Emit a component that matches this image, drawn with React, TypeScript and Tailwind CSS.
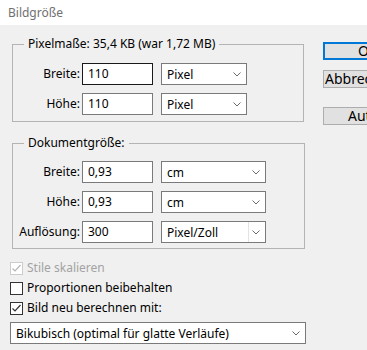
import React from 'react';

function Chevron() {
    return (
        <svg width="8" height="5" viewBox="0 0 8 5" className="shrink-0">
            <polyline points="0.5,0.5 4,4 7.5,0.5" fill="none" stroke="#6b6b6b" strokeWidth="1" />
        </svg>
    );
}

function Select({ value, width, split }: { value: string; width: string; split?: boolean }) {
    return (
        <div className={`flex h-[22px] items-center border border-[#7a7a7a] bg-white ${width}`}>
            <span className="flex-1 pt-[2px] pl-[5px] leading-none">{value}</span>
            {split && <div className="h-full w-px bg-[#e3e3e3]" />}
            <div className="flex w-[16px] justify-center pr-[2px]">
                <Chevron />
            </div>
        </div>
    );
}

function Field({ label, value, unit, selectWidth, focus, split }: {
    label: string; value: string; unit: string; selectWidth: string; focus?: boolean; split?: boolean;
}) {
    return (
        <div className="flex h-[22px] items-center">
            <span className="w-[67px] text-right">{label}</span>
            <div className={`ml-[2px] flex h-[22px] w-[71px] items-center border bg-white pl-[5px] ${focus ? 'border-[#1a1a1a]' : 'border-[#7a7a7a]'}`}>
                {value}
            </div>
            <div className="ml-[8px]">
                <Select value={unit} width={selectWidth} split={split} />
            </div>
        </div>
    );
}

function Check({ checked, disabled, label }: { checked: boolean; disabled?: boolean; label: string }) {
    return (
        <div className={`flex h-[20px] items-center ${disabled ? 'text-[#a3a3a3]' : ''}`}>
            <div className={`flex h-[13px] w-[13px] items-center justify-center border bg-white ${disabled ? 'border-[#cccccc]' : 'border-[#333333]'}`}>
                {checked && (
                    <svg width="11" height="11" viewBox="0 0 11 11">
                        <polyline points="1.5,5.5 4,8 9.5,2" fill="none" stroke={disabled ? '#b5b5b5' : '#333333'} strokeWidth="1.2" />
                    </svg>
                )}
            </div>
            <span className="ml-[4px]">{label}</span>
        </div>
    );
}

export default function App() {
    return (
        <div className="h-[350px] w-[367px] overflow-hidden bg-[#f0f0f0] font-['Noto_Sans',sans-serif] text-[12px] text-black">
            <div className="h-[25px] bg-white pl-[8px] leading-[25px] text-[#707070]">Bildgröße</div>

            <div className="flex">
                <div className="w-[306px] shrink-0 pl-[10px]">
                    <fieldset className="mt-[11px] ml-[2px] w-[292px] border border-[#b4b4b4]">
                        <legend className="ml-[11px] px-[4px] leading-[16px]">Pixelmaße: 35,4 KB (war 1,72 MB)</legend>
                        <div className="flex flex-col gap-[8px] pt-[11px] pb-[6px]">
                            <Field label="Breite:" value="110" unit="Pixel" selectWidth="w-[86px]" focus />
                            <Field label="Höhe:" value="110" unit="Pixel" selectWidth="w-[86px]" />
                        </div>
                    </fieldset>

                    <fieldset className="mt-[13px] ml-[2px] w-[293px] border border-[#b4b4b4]">
                        <legend className="ml-[11px] px-[4px] leading-[16px]">Dokumentgröße:</legend>
                        <div className="flex flex-col gap-[8px] pt-[10px] pb-[5px]">
                            <Field label="Breite:" value="0,93" unit="cm" selectWidth="w-[105px]" />
                            <Field label="Höhe:" value="0,93" unit="cm" selectWidth="w-[105px]" />
                            <Field label="Auflösung:" value="300" unit="Pixel/Zoll" selectWidth="w-[105px]" split />
                        </div>
                    </fieldset>

                    <div className="mt-[9px] flex flex-col">
                        <Check checked disabled label="Stile skalieren" />
                        <Check checked={false} label="Proportionen beibehalten" />
                        <Check checked label="Bild neu berechnen mit:" />
                    </div>

                    <div className="mt-[4px]">
                        <Select value="Bikubisch (optimal für glatte Verläufe)" width="w-[296px]" />
                    </div>
                </div>

                <div className="ml-[17px] flex w-[90px] shrink-0 flex-col pt-[17px] text-[14px]">
                    <div className="h-[18px] border-2 border-[#0078d7] bg-[#e1e1e1] pl-[33px] leading-[14px]">OK</div>
                    <div className="mt-[10px] h-[18px] border border-[#adadad] bg-[#e1e1e1] pl-[1px] leading-[16px]">Abbrechen</div>
                    <div className="mt-[19px] h-[18px] border border-[#adadad] bg-[#e1e1e1] pl-[24px] leading-[16px]">Auto...</div>
                </div>
            </div>
        </div>
    );
}
